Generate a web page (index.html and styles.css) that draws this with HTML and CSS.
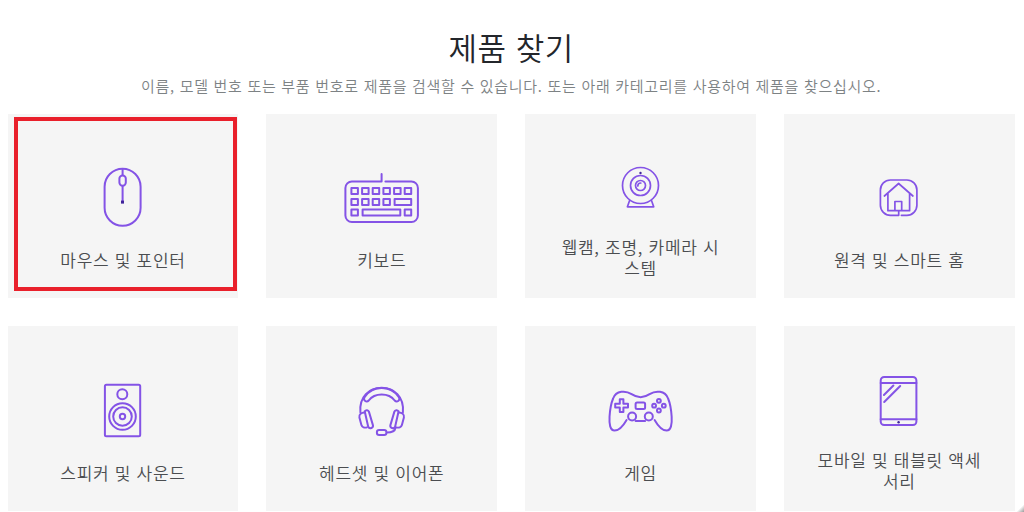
FILE: index.html
```html
<!DOCTYPE html>
<html lang="ko">
<head>
<meta charset="utf-8">
<title>제품 찾기</title>
<link rel="stylesheet" href="styles.css">
</head>
<body>
<main class="finder">
  <h1 class="title">제품 찾기</h1>
  <p class="intro">이름, 모델 번호 또는 부품 번호로 제품을 검색할 수 있습니다. 또는 아래 카테고리를 사용하여 제품을 찾으십시오.</p>
  <div class="grid">
    <a class="card selected">
      <svg class="icon" viewBox="83.4 162 80 66">
        <rect x="105" y="168.7" width="36" height="57" rx="18"/>
        <path d="M123 169v6M123 186v15"/>
        <rect x="119.8" y="175.4" width="6.4" height="10.4" rx="3.2"/>
        <rect class="dot" x="121.4" y="200.6" width="3" height="3"/>
      </svg>
      <span class="label">마우스 및 포인터</span>
    </a>
    <a class="card">
      <svg class="icon" viewBox="342.1 162 80 66">
        <path d="M381.7 174v7.5H352a6.5 6.5 0 0 0-6.5 6.5v27.500a6.500 6.500 0 0 0 6.500 6.500h59.500a6.500 6.500 0 0 0 6.500-6.500V188a6.500 6.500 0 0 0-6.500-6.500H385.500"/>
        <path d="M351.500 188h6.500v6h-6.500zM362.200 188h6.500v6h-6.500zM372.800 188h6.500v6h-6.500zM383.500 188h6.500v6h-6.500zM394.200 188h6.500v6h-6.500zM404.800 188h6.500v6h-6.500zM351.500 199h6.500v6h-6.500zM362.200 199h6.500v6h-6.500zM372.800 199h6.500v6h-6.500zM383.500 199h6.500v6h-6.500zM394.700 199h16.600v6h-16.600zM351.500 209.500h6.500v6h-6.500zM362.700 209.500h37.700v6h-37.700zM404.800 209.500h6.500v6h-6.500z"/>
      </svg>
      <span class="label">키보드</span>
    </a>
    <a class="card">
      <svg class="icon thin" viewBox="600.9 162 80 66">
        <circle cx="640.4" cy="185.500" r="18"/>
        <circle cx="640.4" cy="185.500" r="10"/>
        <circle cx="640.4" cy="185.500" r="5"/>
        <path d="M637.700 186a3 3 0 0 1 3-3M629.500 200.500l-2.200 6.300h26.300l-2.200-6.300"/>
        <circle class="dot" cx="640.4" cy="173" r="1.200"/>
      </svg>
      <span class="label double">웹캠, 조명, 카메라 시스템</span>
    </a>
    <a class="card">
      <svg class="icon thin" viewBox="859.6 162 80 66">
        <path d="M902 215.300h5.500a10 10 0 0 0 10-10V190a10 10 0 0 0-10-10H891a10 10 0 0 0-10 10v15.300a10 10 0 0 0 10 10h8.300V211"/>
        <path d="M885 196l14.200-12.500L913.500 196M888.500 193.500v17.200h21.700V193.500M895.500 210.700v-9.200h6.800v9.200"/>
      </svg>
      <span class="label">원격 및 스마트 홈</span>
    </a>
    <a class="card">
      <svg class="icon" viewBox="83.4 374.500 80 66">
        <rect x="105.300" y="384.300" width="35.300" height="51.400" rx="1.500"/>
        <circle cx="122.700" cy="393.800" r="5"/>
        <circle cx="122.900" cy="416" r="13.300"/>
        <circle cx="122.900" cy="416" r="9.300"/>
        <circle cx="122.900" cy="416" r="2.700"/>
      </svg>
      <span class="label">스피커 및 사운드</span>
    </a>
    <a class="card">
      <svg class="icon" viewBox="342.1 374.500 80 66">
        <path d="M360.500 412c-1.500-16 9-24.700 21.200-24.700S404.500 396 403 412"/>
        <path d="M364.800 396.500c8-12 26-12 34 0a2.600 2.600 0 0 1-4 3.500c-6-8-20-8-26 0a2.600 2.600 0 0 1-4-3.500z"/>
        <path d="M364.800 410.800c1.300-1.800 3.600-1.300 4.200.3l4 13.500c.8 2.700-3.400 4.600-4.700 1.600zM398.700 410.800c-1.300-1.800-3.600-1.300-4.200.3l-4 13.500c-.8 2.700 3.400 4.600 4.700 1.600z"/>
        <path d="M364.500 412c-3 0-5.800 2-5 5l2 7.500c.6 2.200 3.300 3 5.500 2.400M399 412c3 0 5.800 2 5 5l-2 7.500c-.6 2.200-3.300 3-5.500 2.400M395.500 427.500c-.5 3.500-3 4.500-8.500 4.500"/>
        <rect x="377" y="429.500" width="9.500" height="5" rx="2.300"/>
      </svg>
      <span class="label">헤드셋 및 이어폰</span>
    </a>
    <a class="card">
      <svg class="icon" viewBox="600.9 374.500 80 66">
        <path d="M626.500 419.500c-2 3.500-6 10.500-12 10.500-9 0-4-26-1.500-32 3-8 12.500-8.300 18.500-4.300 6 4 12 4 18 0 6-4 15.500-3.700 18.500 4.300 2.500 6 7.500 32-1.500 32-6 0-10-7-12-10.500M635.500 420.500h9.500"/>
        <path d="M619.700 398.700h3.600v4.600h4.600v3.600h-4.600v4.600h-3.600v-4.600h-4.600v-3.600h4.600z"/>
        <rect x="635.500" y="402" width="9.500" height="6.500" rx="1.500"/>
        <circle cx="632" cy="416" r="4"/><circle cx="648.700" cy="416" r="4"/>
        <circle cx="658.800" cy="400.300" r="1.900"/><circle cx="658.800" cy="410" r="1.900"/><circle cx="654" cy="405.200" r="1.900"/><circle cx="663.700" cy="405.200" r="1.900"/>
      </svg>
      <span class="label">게임</span>
    </a>
    <a class="card">
      <svg class="icon" viewBox="859.6 374.500 80 66">
        <rect x="881.300" y="376.500" width="35.700" height="48" rx="3.500"/>
        <path d="M881.300 382.400H917M881.300 418.800H917M884.500 394.500l9.500-9.500M884.800 401.500l16-16"/>
        <circle class="dot" cx="899.200" cy="421.800" r="1.200"/>
      </svg>
      <span class="label double">모바일 및 태블릿 액세서리</span>
    </a>
  </div>
</main>
<div class="corner"></div>
</body>
</html>
```
FILE: styles.css
```css
* { box-sizing: border-box; }
body {
  margin: 0;
  height: 512px;
  overflow: hidden;
  background: #fff;
  font-family: "Noto Sans CJK KR", sans-serif;
  font-weight: 350;
}
.finder { padding: 27px 9.300px 0 7.600px; }
.title {
  margin: 0;
  height: 40px;
  line-height: 40px;
  font-size: 31px;
  font-weight: 350;
  letter-spacing: 0.5px;
  text-align: center;
  color: #23262b;
}
.intro {
  margin: 8px 0 0;
  height: 22px;
  line-height: 22px;
  font-size: 15px;
  letter-spacing: 0.7px;
  text-align: center;
  white-space: nowrap;
  color: #7d8284;
}
.grid {
  display: grid;
  grid-template-columns: repeat(4, 1fr);
  grid-auto-rows: 184.5px;
  gap: 28px;
  margin-top: 16.5px;
}
.card {
  position: relative;
  display: flex;
  flex-direction: column;
  align-items: center;
  padding-top: 48.500px;
  background: #f5f5f5;
}
.selected::after {
  content: "";
  position: absolute;
  inset: 3px 1.500px 7px 6px;
  border: 4px solid #e9202b;
}
.icon {
  flex: none;
  width: 80px;
  height: 66px;
  fill: none;
  stroke: #8453e6;
  stroke-width: 2;
  stroke-linecap: round;
  stroke-linejoin: round;
}
.thin { stroke-width: 1.700; }
.dot { fill: #40249a; stroke: none; }
.label {
  width: 168px;
  margin-top: 21px;
  line-height: 21px;
  font-size: 17px;
  letter-spacing: 0.700px;
  text-align: center;
  word-break: break-all;
  color: #4b4d50;
}
.double { margin-top: 8px; }
.corner {
  position: absolute;
  right: 0;
  bottom: 0;
  width: 8px;
  height: 8px;
  background: linear-gradient(135deg, transparent 50%, #999);
}
```
